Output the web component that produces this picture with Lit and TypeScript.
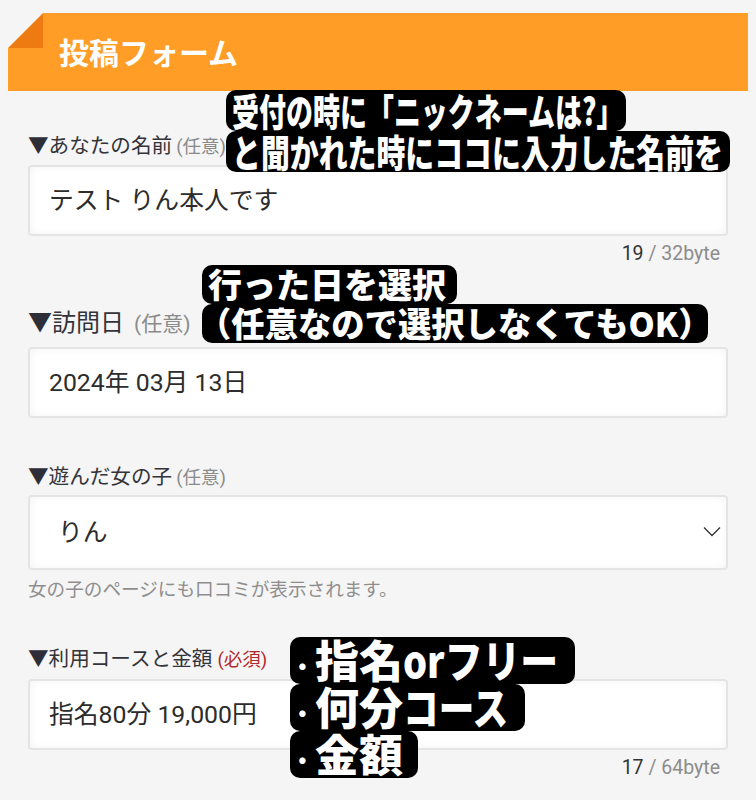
import { LitElement, html, css } from "lit";
import { customElement } from "lit/decorators.js";

@customElement("app-root")
export class AppRoot extends LitElement {
  static styles = css`
    :host {
      display: block;
      position: relative;
      width: 756px;
      height: 800px;
      overflow: hidden;
      background: #f5f5f5;
      font-family: Roboto, "Noto Sans CJK JP", sans-serif;
      color: #2b2b30;
    }
    .head {
      position: relative;
      margin: 13px 8px 0;
      height: 78px;
      background: #ff9d26;
      display: flex;
      align-items: center;
      padding-left: 51px;
      padding-bottom: 2px;
      color: #fff;
      font-size: 30px;
      font-weight: 700;
      font-family: "Noto Sans CJK JP", sans-serif;
      box-sizing: border-box;
    }
    .fold {
      position: absolute;
      left: 0;
      top: 0;
      width: 35px;
      height: 35px;
    }
    .form {
      padding: 0 28px;
      display: flex;
      flex-direction: column;
    }
    .label {
      font-size: 20.6px;
      line-height: 26px;
      height: 26px;
      color: #33333a;
      white-space: nowrap;
    }
    .big { font-size: 24px; }
    .big .opt { font-size: 21px; margin-left: 4px; }
    .tri { color: #2e2e38; }
    .opt { font-size: 18.5px; color: #8a8a8a; margin-left: -1px; }
    .req { font-size: 18.5px; color: #b3292b; margin-left: 0; }
    .box {
      box-sizing: border-box;
      background: #fff;
      border: 2px solid #e4e4e4;
      border-radius: 4px;
      box-shadow: inset 0 0 8px rgba(0, 0, 0, 0.05);
      display: flex;
      align-items: center;
      justify-content: space-between;
      padding: 0 5px 5px 19px;
      font-size: 24.8px;
      color: #2c2c2c;
      white-space: nowrap;
    }
    .counter {
      text-align: right;
      font-size: 19.5px;
      line-height: 24px;
      padding-right: 8px;
      color: #8c8c8c;
    }
    .counter b { font-weight: 400; color: #333; }
    .help { font-size: 18.6px; line-height: 24px; color: #8e8e8e; }
    .f1 { margin-top: 42px; }
    .b1 { height: 71px; margin-top: 6px; }
    .c1 { margin-top: 6px; }
    .f2 { margin-top: 44px; }
    .b2 { height: 71px; margin-top: 11px; }
    .f3 { margin-top: 46px; }
    .b3 { height: 75px; margin-top: 5px; padding-left: 28px; }
    .h3 { margin-top: 8px; }
    .f4 { margin-top: 44px; }
    .b4 { height: 71px; margin-top: 7px; }
    .c4 { margin-top: 6px; }
    .chev { width: 18px; height: 12px; margin-top: 3px; }

    .note {
      position: absolute;
      display: flex;
      flex-direction: column;
      align-items: flex-start;
      font-family: "Noto Sans CJK JP", sans-serif;
      font-weight: 900;
    }
    .pill {
      background: #000;
      color: #fff;
      border-radius: 10px;
      box-sizing: border-box;
      display: block;
      white-space: nowrap;
    }
    .pill span { display: inline-block; transform-origin: 0 50%; }
    .n1 { left: 226px; top: 90px; }
    .n1 .pill { height: 41px; line-height: 40px; font-size: 38px; padding-left: 6px; }
    .p1 { width: 400px; }
    .p1 span { transform: scaleX(0.71); }
    .p2 { width: 504px; }
    .p2 span { transform: scaleX(0.76); }
    .n2 { left: 202px; top: 265px; }
    .n2 .pill { height: 39px; line-height: 38px; font-size: 34px; padding-left: 6px; }
    .p3 { width: 255px; }
    .p4 { width: 506px; }
    .p4 span { transform: scaleX(0.98); margin-left: -10px; }
    .n3 { left: 290px; top: 637px; }
    .n3 .pill { height: 47px; line-height: 45px; font-size: 44px; }
    .p5 { width: 285px; }
    .p6 { width: 235px; }
    .p7 { width: 128px; }
    .dot { width: 25px; text-align: center; font-size: 30px; }
    .or { transform: scaleX(0.86); }
    .co { transform: scaleX(0.81); }
  `;

  render() {
    return html`
      <div class="head">
        <svg class="fold" viewBox="0 0 35 35">
          <polygon points="35,0 35,35 0,35" fill="#ee7b12"></polygon>
          <polygon points="35,0 0,35 0,0" fill="#f5f5f5"></polygon>
        </svg>
        投稿フォーム
      </div>
      <div class="form">
        <div class="label f1"><span class="tri">▼</span>あなたの名前 <span class="opt">(任意)</span></div>
        <div class="box b1">テスト りん本人です</div>
        <div class="counter c1"><b>19</b> / 32byte</div>

        <div class="label big f2"><span class="tri">▼</span>訪問日 <span class="opt">(任意)</span></div>
        <div class="box b2">2024年 03月 13日</div>

        <div class="label f3"><span class="tri">▼</span>遊んだ女の子 <span class="opt">(任意)</span></div>
        <div class="box b3">
          りん
          <svg class="chev" viewBox="0 0 18 12">
            <path d="M1 1.5 L9 9.5 L17 1.5" fill="none" stroke="#333" stroke-width="1.3"></path>
          </svg>
        </div>
        <div class="help h3">女の子のページにも口コミが表示されます。</div>

        <div class="label f4"><span class="tri">▼</span>利用コースと金額 <span class="req">(必須)</span></div>
        <div class="box b4">指名80分 19,000円</div>
        <div class="counter c4"><b>17</b> / 64byte</div>
      </div>

      <div class="note n1">
        <div class="pill p1"><span>受付の時に「ニックネームは?」</span></div>
        <div class="pill p2"><span>と聞かれた時にココに入力した名前を</span></div>
      </div>
      <div class="note n2">
        <div class="pill p3"><span>行った日を選択</span></div>
        <div class="pill p4"><span>（任意なので選択しなくてもOK）</span></div>
      </div>
      <div class="note n3">
        <div class="pill p5"><span class="dot">·</span><span>指名</span><span class="or">orフリー</span></div>
        <div class="pill p6"><span class="dot">·</span><span>何分</span><span class="co">コース</span></div>
        <div class="pill p7"><span class="dot">·</span><span>金額</span></div>
      </div>
    `;
  }
}
